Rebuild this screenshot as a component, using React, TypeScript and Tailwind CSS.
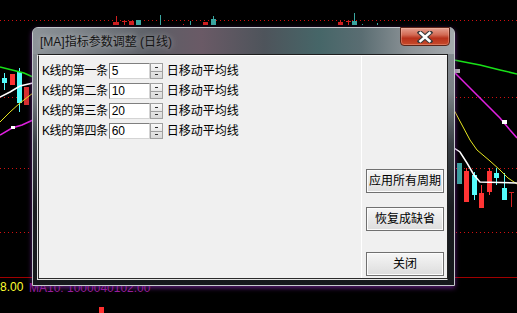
import React from 'react';

type Candle = { x: number; w: number; top: number; bottom: number; wt?: number; wb?: number; c: string };

const RED = '#ff3434';
const CYAN = '#54fcfc';
const TEAL = '#3aa6a0';

const candles: Candle[] = [
  // top strip
  { x: 113, w: 6, top: 22, bottom: 25, wt: 16, c: '#d02020' },
  { x: 129, w: 5, top: 21, bottom: 25, c: '#d02020' },
  { x: 136, w: 5, top: 20, bottom: 25, c: TEAL },
  { x: 160, w: 1, top: 15, bottom: 25, c: TEAL },
  { x: 183, w: 1, top: 24, bottom: 25, c: '#d02020' },
  { x: 190, w: 1, top: 21, bottom: 25, c: TEAL },
  { x: 203, w: 5, top: 22, bottom: 25, c: '#d02020' },
  { x: 211, w: 5, top: 19, bottom: 25, wt: 16, c: TEAL },
  { x: 338, w: 5, top: 22, bottom: 25, wt: 20, c: '#d02020' },
  { x: 352, w: 5, top: 21, bottom: 25, wt: 13, c: TEAL },
  { x: 362, w: 1, top: 24, bottom: 25, c: TEAL },
  { x: 377, w: 1, top: 23, bottom: 25, c: TEAL },
  // left edge
  { x: 2, w: 5, top: 78, bottom: 83, wt: 73, wb: 90, c: CYAN },
  { x: 10, w: 5, top: 74, bottom: 85, c: RED },
  { x: 17, w: 5, top: 72, bottom: 103, wt: 68, wb: 112, c: CYAN },
  { x: 24, w: 5, top: 87, bottom: 105, c: '#d83030' },
  // right edge
  { x: 457, w: 5, top: 163, bottom: 184, c: TEAL },
  { x: 464, w: 5, top: 171, bottom: 202, wt: 168, c: RED },
  { x: 472, w: 5, top: 175, bottom: 195, wt: 172, wb: 200, c: CYAN },
  { x: 479, w: 5, top: 193, bottom: 208, wt: 185, c: RED },
  { x: 487, w: 5, top: 171, bottom: 192, wt: 168, wb: 195, c: RED },
  { x: 494, w: 5, top: 173, bottom: 178, wt: 168, wb: 185, c: CYAN },
  { x: 502, w: 5, top: 188, bottom: 200, wt: 173, c: CYAN },
];

const Chart = () => (
  <svg width={517} height={313} className="absolute inset-0">
    <g stroke="#d01010" strokeWidth={1} strokeDasharray="1 3">
      <line x1={0} y1={20.5} x2={517} y2={20.5} />
      <line x1={0} y1={97.5} x2={517} y2={97.5} />
      <line x1={0} y1={168.5} x2={517} y2={168.5} />
      <line x1={0} y1={232.5} x2={517} y2={232.5} />
    </g>
    <line x1={0} y1={277.5} x2={517} y2={277.5} stroke="#a00000" />
    {candles.map((k, i) => (
      <g key={i}>
        {(k.wt !== undefined || k.wb !== undefined) && (
          <line
            x1={k.x + Math.floor(k.w / 2) + 0.5}
            x2={k.x + Math.floor(k.w / 2) + 0.5}
            y1={k.wt ?? k.top}
            y2={k.wb ?? k.bottom}
            stroke={k.c}
          />
        )}
        <rect x={k.x} y={k.top} width={k.w} height={k.bottom - k.top} fill={k.c} />
      </g>
    ))}
    {/* small T shaped marks */}
    <path d="M122 21.5h5M124.5 21v4M346 21.5h5M348.5 21v4M509 192.5h5M511.5 192v15" stroke="#d02020" />
    {/* left edge lines */}
    <polyline points="0,67 12,70 24,73 33,77" fill="none" stroke="#18e018" strokeWidth={1.5} />
    <polyline points="0,97 10,92 20,86 33,83" fill="none" stroke="#ffffff" strokeWidth={1.5} />
    <polyline points="0,122 10,112 20,103 33,93" fill="none" stroke="#e8e820" />
    <polyline points="0,135 12,128 22,125 33,120" fill="none" stroke="#e020e0" strokeWidth={1.5} />
    <rect x={11} y={126} width={4} height={3} fill="#ffffff" />
    {/* right edge lines */}
    <polyline points="454,60 480,65 500,70 517,74" fill="none" stroke="#18e018" strokeWidth={1.5} />
    <polyline points="454,72 470,88 485,103 500,118 510,130 517,138" fill="none" stroke="#e020e0" strokeWidth={1.5} />
    <rect x={455} y={69} width={5} height={4} fill="#b0b0b0" />
    <rect x={502} y={120} width={5} height={4} fill="#ffffff" />
    <polyline points="454,110 462,125 470,140 477,150 490,161 500,170 508,178 517,184" fill="none" stroke="#e8e820" />
    <polyline points="454,148 460,152 467,163 474,175 480,182 517,183" fill="none" stroke="#ffffff" strokeWidth={1.5} />
    <rect x={99} y={307} width={5} height={6} fill="#ff3030" />
    <text x={0} y={291} fill="#ffff30" fontSize={12} fontFamily="Liberation Sans, sans-serif">8.00</text>
    <text x={29} y={292} fill="#9a1c9a" fontSize={12} fontFamily="Liberation Sans, sans-serif">MA10: 1000040102.00</text>
  </svg>
);

const Spin = () => (
  <div className="flex flex-col w-[13px] h-[16px] border border-[#a0a0a0] bg-gradient-to-b from-[#f8f8f8] to-[#d8d8d8]">
    <div className="flex-1 flex items-center justify-center border-b border-[#a0a0a0]">
      <span className="block w-[3px] h-[1px] bg-[#303030]" />
    </div>
    <div className="flex-1 flex items-center justify-center">
      <span className="block w-[3px] h-[1px] bg-[#303030]" />
    </div>
  </div>
);

const rows = [
  ['第一条', '5'],
  ['第二条', '10'],
  ['第三条', '20'],
  ['第四条', '60'],
];

const Btn = ({ label, className = '' }: { label: string; className?: string }) => (
  <button
    type="button"
    className={`w-[78px] h-[24px] border border-[#707070] bg-gradient-to-b from-[#f6f6f6] to-[#dddddd] shadow-[inset_0_0_0_1px_#fcfcfc] text-[12px] text-black leading-none ${className}`}
  >
    {label}
  </button>
);

export default function App() {
  return (
    <div
      className="relative w-[517px] h-[313px] bg-black overflow-hidden"
      style={{ fontFamily: '"Liberation Sans", "Noto Sans CJK SC", sans-serif' }}
    >
      <Chart />

      <div className="absolute left-[32px] top-[27px] w-[423px] h-[259px] flex flex-col border border-[#c4c8cc] rounded-t-[6px] bg-[linear-gradient(180deg,#8c9297_0%,#7a8086_25%,#3a3f45_45%,#1a1d21_70%,#15181c_100%)] pl-[4px] pr-[6px] pb-[5px] shadow-[0_2px_5px_rgba(130,40,170,0.7)]">
        {/* title bar */}
        <div className="h-[26px] -ml-[4px] -mr-[6px] pl-[7px] pt-[2px] flex items-center rounded-t-[5px] bg-[linear-gradient(90deg,#8d9398_0%,#7b8187_12%,#5c5f66_28%,#6a5a66_40%,#4e545b_55%,#466668_68%,#5a6d72_78%,#8e9498_90%,#a4a9ad_100%)]">
          <span className="text-[12px] text-[#141414] [text-shadow:0_0_6px_rgba(255,255,255,0.55)]">
            [MA]指标参数调整 (日线)
          </span>
        </div>

        {/* close button */}
        <div className="absolute right-[4px] -top-[1px] w-[50px] h-[19px] rounded-b-[4px] border border-[#5a2418] bg-[linear-gradient(180deg,#e6a090_0%,#d26a54_40%,#b8321c_60%,#c84a2a_100%)] shadow-[inset_0_0_0_1px_rgba(255,200,180,0.35)] flex items-center justify-center">
          <svg width="16" height="12" viewBox="0 0 16 12">
            <path d="M3 1.5 L13 10.5 M13 1.5 L3 10.5" stroke="#3a3a3a" strokeWidth={4.6} strokeLinecap="square" />
            <path d="M3.5 2 L12.5 10 M12.5 2 L3.5 10" stroke="#ffffff" strokeWidth={2.6} strokeLinecap="square" />
          </svg>
        </div>

        {/* client area */}
        <div className="flex-1 flex border border-t-[#1e1e1e] border-r-[#1e1e1e] border-l-[#e6e6e6] border-b-[#e6e6e6]">
          <div className="flex-1 flex border-t border-l border-b border-t-white border-l-[#2a2a2a] border-b-[#2a2a2a] bg-[#f0f0f0]">
            <div className="w-[322px] pt-[7px] pl-[3px] flex flex-col gap-[4px]">
              {rows.map(([n, v]) => (
                <div key={n} className="flex items-center h-[16px] text-[12px] text-black">
                  <span className="whitespace-nowrap leading-none tracking-[-0.4px]">K线的{n}</span>
                  <div className="ml-[1px] w-[41px] h-[16px] bg-white border border-[#7f7f7f] border-b-[#d4d4d4] border-r-[#d4d4d4] pl-[2px] flex items-center leading-none">
                    {v}
                  </div>
                  <Spin />
                  <span className="ml-[4px] leading-none whitespace-nowrap">日移动平均线</span>
                </div>
              ))}
            </div>
            <div className="w-px bg-white" />
            <div className="flex-1 pl-[4px] pt-[113px] flex flex-col items-start">
              <Btn label="应用所有周期" />
              <Btn label="恢复成缺省" className="mt-[14px]" />
              <Btn label="关闭" className="mt-[21px]" />
            </div>
          </div>
        </div>
      </div>
    </div>
  );
}
